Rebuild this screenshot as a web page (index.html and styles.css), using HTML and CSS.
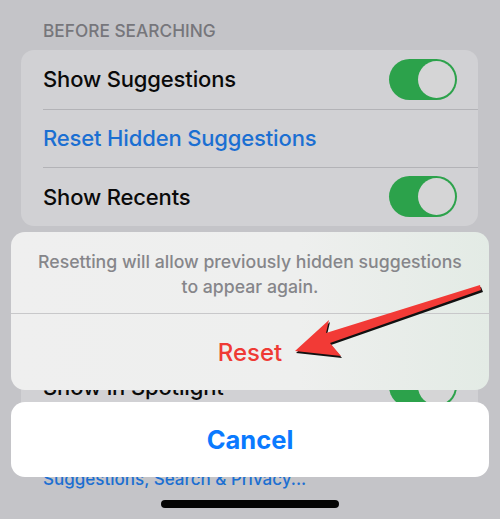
FILE: index.html
```html
<!DOCTYPE html>
<html>
<head>
<meta charset="utf-8">
<link rel="stylesheet" href="styles.css">
</head>
<body>
<div class="page">
  <div class="section-header">BEFORE SEARCHING</div>
  <div class="card">
    <div class="row"><span class="label">Show Suggestions</span><span class="toggle"><span class="knob"></span></span></div>
    <div class="row"><span class="label link">Reset Hidden Suggestions</span></div>
    <div class="row"><span class="label">Show Recents</span><span class="toggle"><span class="knob"></span></span></div>
  </div>
  <div class="section-header second">CONTENT FROM APPLE</div>
  <div class="card">
    <div class="row"><span class="label">Show in Look Up</span><span class="toggle"><span class="knob"></span></span></div>
    <div class="row"><span class="label">Show in Spotlight</span><span class="toggle"><span class="knob"></span></span></div>
  </div>
  <div class="footer">Apple can show content when looking up text or objects in photos, or when searching. About Siri<br><span class="footer-link">Suggestions, Search &amp; Privacy...</span></div>
</div>

<div class="sheet">
  <div class="sheet-group">
    <div class="sheet-message">Resetting will allow previously hidden suggestions<br>to appear again.</div>
    <div class="sheet-action">Reset</div>
  </div>
  <div class="sheet-cancel">Cancel</div>
</div>

<div class="home-indicator"></div>

<svg class="arrow" width="500" height="519" viewBox="0 0 500 519">
  <polygon points="296,353 330,322 327,335 481,287 483,292 331,345 342,358" fill="#111"/>
  <polygon points="295,351 329,320 326,333 480,285 481,290 330,343 341,356" fill="#f23a36"/>
</svg>
</body>
</html>
```
FILE: styles.css
```css
html, body {
  margin: 0;
  padding: 0;
}
body {
  width: 500px;
  height: 519px;
  overflow: hidden;
  background: #c4c4c8;
  font-family: Inter, "Noto Sans", "Liberation Sans", sans-serif;
  position: relative;
}
.page {
  padding: 0 22px 0 21px;
}
.section-header {
  color: #76767b;
  font-size: 17.3px;
  font-weight: 500;
  padding: 20px 0 0 22px;
  height: 30px;
}
.section-header.second {
  padding-top: 43px;
  height: 30px;
}
.card {
  background: #d1d1d4;
  border-radius: 13px;
  overflow: hidden;
}
.row {
  height: 58.5px;
  margin-left: 22px;
  padding-right: 21px;
  display: flex;
  align-items: center;
  justify-content: space-between;
  border-top: 1px solid #b3b3b7;
  box-sizing: border-box;
}
.row:first-child {
  border-top: none;
}
.label {
  font-size: 22px;
  font-weight: 500;
  color: #0a0a0a;
  letter-spacing: -0.15px;
}
.label.link {
  color: #1b6fd2;
}
.toggle {
  width: 68px;
  height: 41px;
  border-radius: 21px;
  background: #2ca24b;
  position: relative;
  box-sizing: border-box;
}
.knob {
  position: absolute;
  right: 2px;
  top: 2px;
  width: 37px;
  height: 37px;
  border-radius: 50%;
  background: #d5d5d6;
}
.footer {
  color: #7b7b80;
  font-size: 17px;
  line-height: 22px;
  padding: 8px 0 0 22px;
}
.footer-link {
  color: #1b6fd2;
  font-weight: 500;
}
.sheet {
  position: absolute;
  left: 11px;
  right: 11px;
  top: 232px;
  display: flex;
  flex-direction: column;
  gap: 12px;
}
.sheet-group {
  background: linear-gradient(90deg, #efefef 0%, #eeefee 60%, #e3ebe5 100%);
  border-radius: 14px;
  overflow: hidden;
}
.sheet-message {
  color: #86868a;
  font-size: 17.7px;
  font-weight: 500;
  line-height: 25px;
  text-align: center;
  padding: 17px 10px 14px;
  height: 50px;
  border-bottom: 1px solid #c8c8ca;
  white-space: nowrap;
}
.sheet-action {
  height: 76px;
  display: flex;
  align-items: center;
  justify-content: center;
  color: #ef3a35;
  font-size: 24px;
  font-weight: 500;
}
.sheet-cancel {
  height: 75px;
  background: #ffffff;
  border-radius: 14px;
  display: flex;
  align-items: center;
  justify-content: center;
  color: #0a7aff;
  font-size: 25.5px;
  font-weight: 700;
}
.home-indicator {
  position: absolute;
  left: 161px;
  top: 500px;
  width: 178px;
  height: 8px;
  border-radius: 4px;
  background: #050505;
}
.arrow {
  position: absolute;
  left: 0;
  top: 0;
}
```
